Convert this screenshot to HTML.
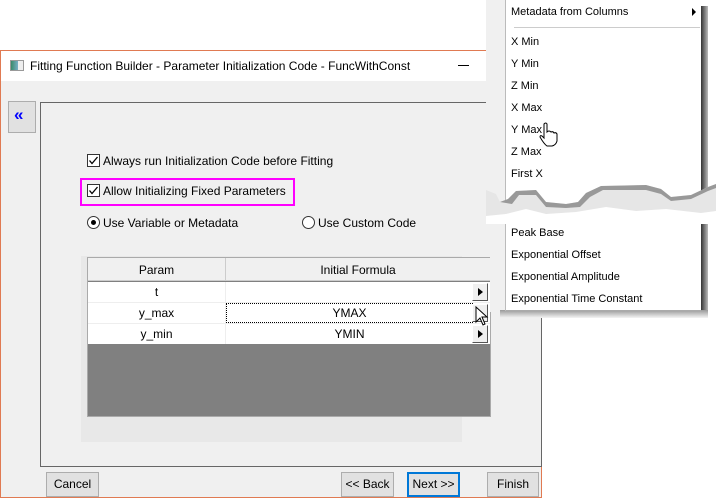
<!DOCTYPE html>
<html><head><meta charset="utf-8"><style>
*{margin:0;padding:0;box-sizing:border-box}
body{width:716px;height:499px;background:#fff;position:relative;overflow:hidden;font-family:"Liberation Sans",sans-serif;font-size:12px;color:#000}
.a{position:absolute}
.t{position:absolute;white-space:nowrap;line-height:14px}
.btn{position:absolute;background:#e1e1e1;border:1px solid #adadad;text-align:center;line-height:22px;font-size:12px}
.cb{position:absolute;width:13px;height:13px;border:1px solid #333;background:#fff}
.rd{position:absolute;width:13px;height:13px;border:1px solid #333;border-radius:50%;background:#fff}
.cell{position:absolute;text-align:center;line-height:20px}
.arr{position:absolute;width:16px;height:18px;background:#f0f0f0;border-right:1px solid #555;border-bottom:1px solid #555;border-top:1px solid #fff;border-left:1px solid #fff}
.arr:after{content:"";position:absolute;left:5px;top:4px;border-left:5px solid #000;border-top:4px solid transparent;border-bottom:4px solid transparent}
.mi{position:absolute;left:511px;font-size:11px;line-height:14px;color:#000;white-space:nowrap}
</style></head><body>
<div class="a" style="left:0;top:50px;width:542px;height:448px;border:1px solid #e07a52;background:#f0f0f0"></div>
<div class="a" style="left:1px;top:51px;width:540px;height:30px;background:#fff"></div>
<div class="a" style="left:10px;top:60px;width:14px;height:11px;border:1px solid #999;background:linear-gradient(90deg,#3a8a6a 0,#7ab0c8 60%,#eee 60%)"></div>
<div class="t" style="left:30px;top:59px;font-size:12px">Fitting Function Builder - Parameter Initialization Code - FuncWithConst</div>
<div class="a" style="left:458px;top:65px;width:11px;height:1px;background:#000"></div>
<div class="a" style="left:8px;top:101px;width:28px;height:32px;background:#e1e1e1;border:1px solid #adadad"></div>
<div class="t" style="left:14px;top:106px;color:#0000ff;font-size:17px;font-weight:bold;line-height:18px">«</div>
<div class="a" style="left:40px;top:102px;width:502px;height:365px;border:1px solid #666"></div>
<svg class="a" style="left:87px;top:154px" width="13" height="13"><rect x="0.5" y="0.5" width="12" height="12" fill="#fff" stroke="#333"/><path d="M2.5 6.5 L5 9.5 L10.5 3" fill="none" stroke="#000" stroke-width="1.3"/></svg>
<div class="t" style="left:103px;top:154px">Always run Initialization Code before Fitting</div>
<div class="a" style="left:80px;top:178px;width:215px;height:28px;border:2px solid #ff00ff"></div>
<svg class="a" style="left:87px;top:184px" width="13" height="13"><rect x="0.5" y="0.5" width="12" height="12" fill="#fff" stroke="#333"/><path d="M2.5 6.5 L5 9.5 L10.5 3" fill="none" stroke="#000" stroke-width="1.3"/></svg>
<div class="t" style="left:103px;top:184px">Allow Initializing Fixed Parameters</div>
<div class="rd" style="left:87px;top:216px"></div><div class="a" style="left:91px;top:220px;width:5px;height:5px;border-radius:50%;background:#000"></div>
<div class="t" style="left:103px;top:216px">Use Variable or Metadata</div>
<div class="rd" style="left:302px;top:216px"></div>
<div class="t" style="left:318px;top:216px">Use Custom Code</div>
<div class="a" style="left:81px;top:256px;width:381px;height:186px;background:#e8e8e8"></div>
<div class="a" style="left:87px;top:257px;width:404px;height:160px;background:#808080;border:1px solid #aaa"></div>
<div class="a" style="left:88px;top:258px;width:402px;height:23px;background:#f0f0f0;border-bottom:1px solid #ccc"></div>
<div class="a" style="left:225px;top:258px;width:1px;height:23px;background:#ccc"></div>
<div class="cell" style="left:88px;top:260px;width:137px">Param</div>
<div class="cell" style="left:226px;top:260px;width:264px">Initial Formula</div>
<div class="a" style="left:88px;top:282px;width:402px;height:62px;background:#fff"></div>
<div class="a" style="left:88px;top:302px;width:402px;height:1px;background:#eee"></div>
<div class="a" style="left:88px;top:323px;width:402px;height:1px;background:#eee"></div>
<div class="a" style="left:225px;top:282px;width:1px;height:62px;background:#eee"></div>
<div class="a" style="left:226px;top:303px;width:247px;height:20px;border:1px dotted #000"></div>
<div class="cell" style="left:88px;top:282px;width:137px">t</div>
<div class="cell" style="left:88px;top:303px;width:137px">y_max</div>
<div class="cell" style="left:88px;top:324px;width:137px">y_min</div>
<div class="cell" style="left:226px;top:303px;width:247px">YMAX</div>
<div class="cell" style="left:226px;top:324px;width:247px">YMIN</div>
<div class="arr" style="left:472px;top:283px"></div>
<div class="arr" style="left:472px;top:304px"></div>
<div class="arr" style="left:472px;top:325px"></div>
<svg class="a" style="left:475px;top:306px" width="16" height="22"><path d="M1 1 L1 16 L5 12 L8 19 L10 18 L7 11 L12 11 Z" fill="#fff" stroke="#000"/></svg>
<div class="btn" style="left:46px;top:472px;width:53px;height:25px">Cancel</div>
<div class="btn" style="left:341px;top:472px;width:53px;height:25px">&lt;&lt; Back</div>
<div class="btn" style="left:407px;top:472px;width:53px;height:25px;border:2px solid #0078d7;line-height:21px">Next &gt;&gt;</div>
<div class="btn" style="left:487px;top:472px;width:52px;height:25px">Finish</div>
<div class="a" style="left:486px;top:0;width:20px;height:186px;background:#f0f0f0"></div>
<div class="a" style="left:490px;top:220px;width:16px;height:92px;background:#f0f0f0"></div>
<div class="a" style="left:701px;top:6px;width:7px;height:312px;background:linear-gradient(90deg,#333,#bbb)"></div>
<div class="a" style="left:500px;top:310px;width:208px;height:8px;background:linear-gradient(#999,#f4f4f4)"></div>
<div class="a" style="left:505px;top:0;width:196px;height:311px;background:#fff;border-left:1px solid #ccc;border-bottom:1px solid #aaa"></div>
<div class="a" style="left:505px;top:0;width:1px;height:311px;background:#bbb"></div>
<div class="a" style="left:514px;top:27px;width:186px;height:1px;background:#ccc"></div>
<div class="mi" style="top:5px">Metadata from Columns</div>
<div class="a" style="left:692px;top:8px;border-left:4px solid #000;border-top:4px solid transparent;border-bottom:4px solid transparent"></div>
<div class="mi" style="top:35px">X Min</div>
<div class="mi" style="top:57px">Y Min</div>
<div class="mi" style="top:79px">Z Min</div>
<div class="mi" style="top:101px">X Max</div>
<div class="mi" style="top:123px">Y Max</div>
<div class="mi" style="top:145px">Z Max</div>
<div class="mi" style="top:167px">First X</div>
<svg class="a" style="left:538px;top:122px" width="22" height="26"><path d="M6 2 Q8 0 9 2 L9 10 Q11 8 13 10 Q15 9 16 11 Q18 10 19 12 L19 19 Q18 23 14 24 L9 24 Q6 22 2 15 Q2 13 4 14 L6 16 Z" fill="#fff" stroke="#000" stroke-width="1"/></svg>
<svg class="a" style="left:486px;top:178px" width="230" height="46">
<path d="M0 12 L10 16 L14 24 L22 21 L30 13 L50 12 L60 24 L80 26 L92 24 L100 15 L115 8 L160 7 L175 11 L185 19 L205 17 L222 9 L230 6 L230 46 L0 46 Z" fill="#e6e6e6"/>
<path d="M14 24 L22 21 L30 13 L50 12 L60 24 L80 26 L92 24 L100 15 L115 8 L160 7 L175 11 L185 19 L205 17 L222 9 L230 6 L230 10 L222 13 L205 21 L185 23 L175 16 L160 12 L117 12 L104 19 L94 29 L80 30 L60 29 L50 17 L33 17 L26 26 Z" fill="#999"/>
<path d="M0 38 L20 36 L40 31 L60 36 L90 34 L120 29 L150 33 L180 31 L215 35 L230 33 L230 46 L0 46 Z" fill="#fff"/>
</svg>
<div class="a" style="left:505px;top:214px;width:196px;height:10px;background:#fff"></div>
<div class="mi" style="top:226px">Peak Base</div>
<div class="mi" style="top:248px">Exponential Offset</div>
<div class="mi" style="top:270px">Exponential Amplitude</div>
<div class="mi" style="top:292px">Exponential Time Constant</div>
</body></html>
